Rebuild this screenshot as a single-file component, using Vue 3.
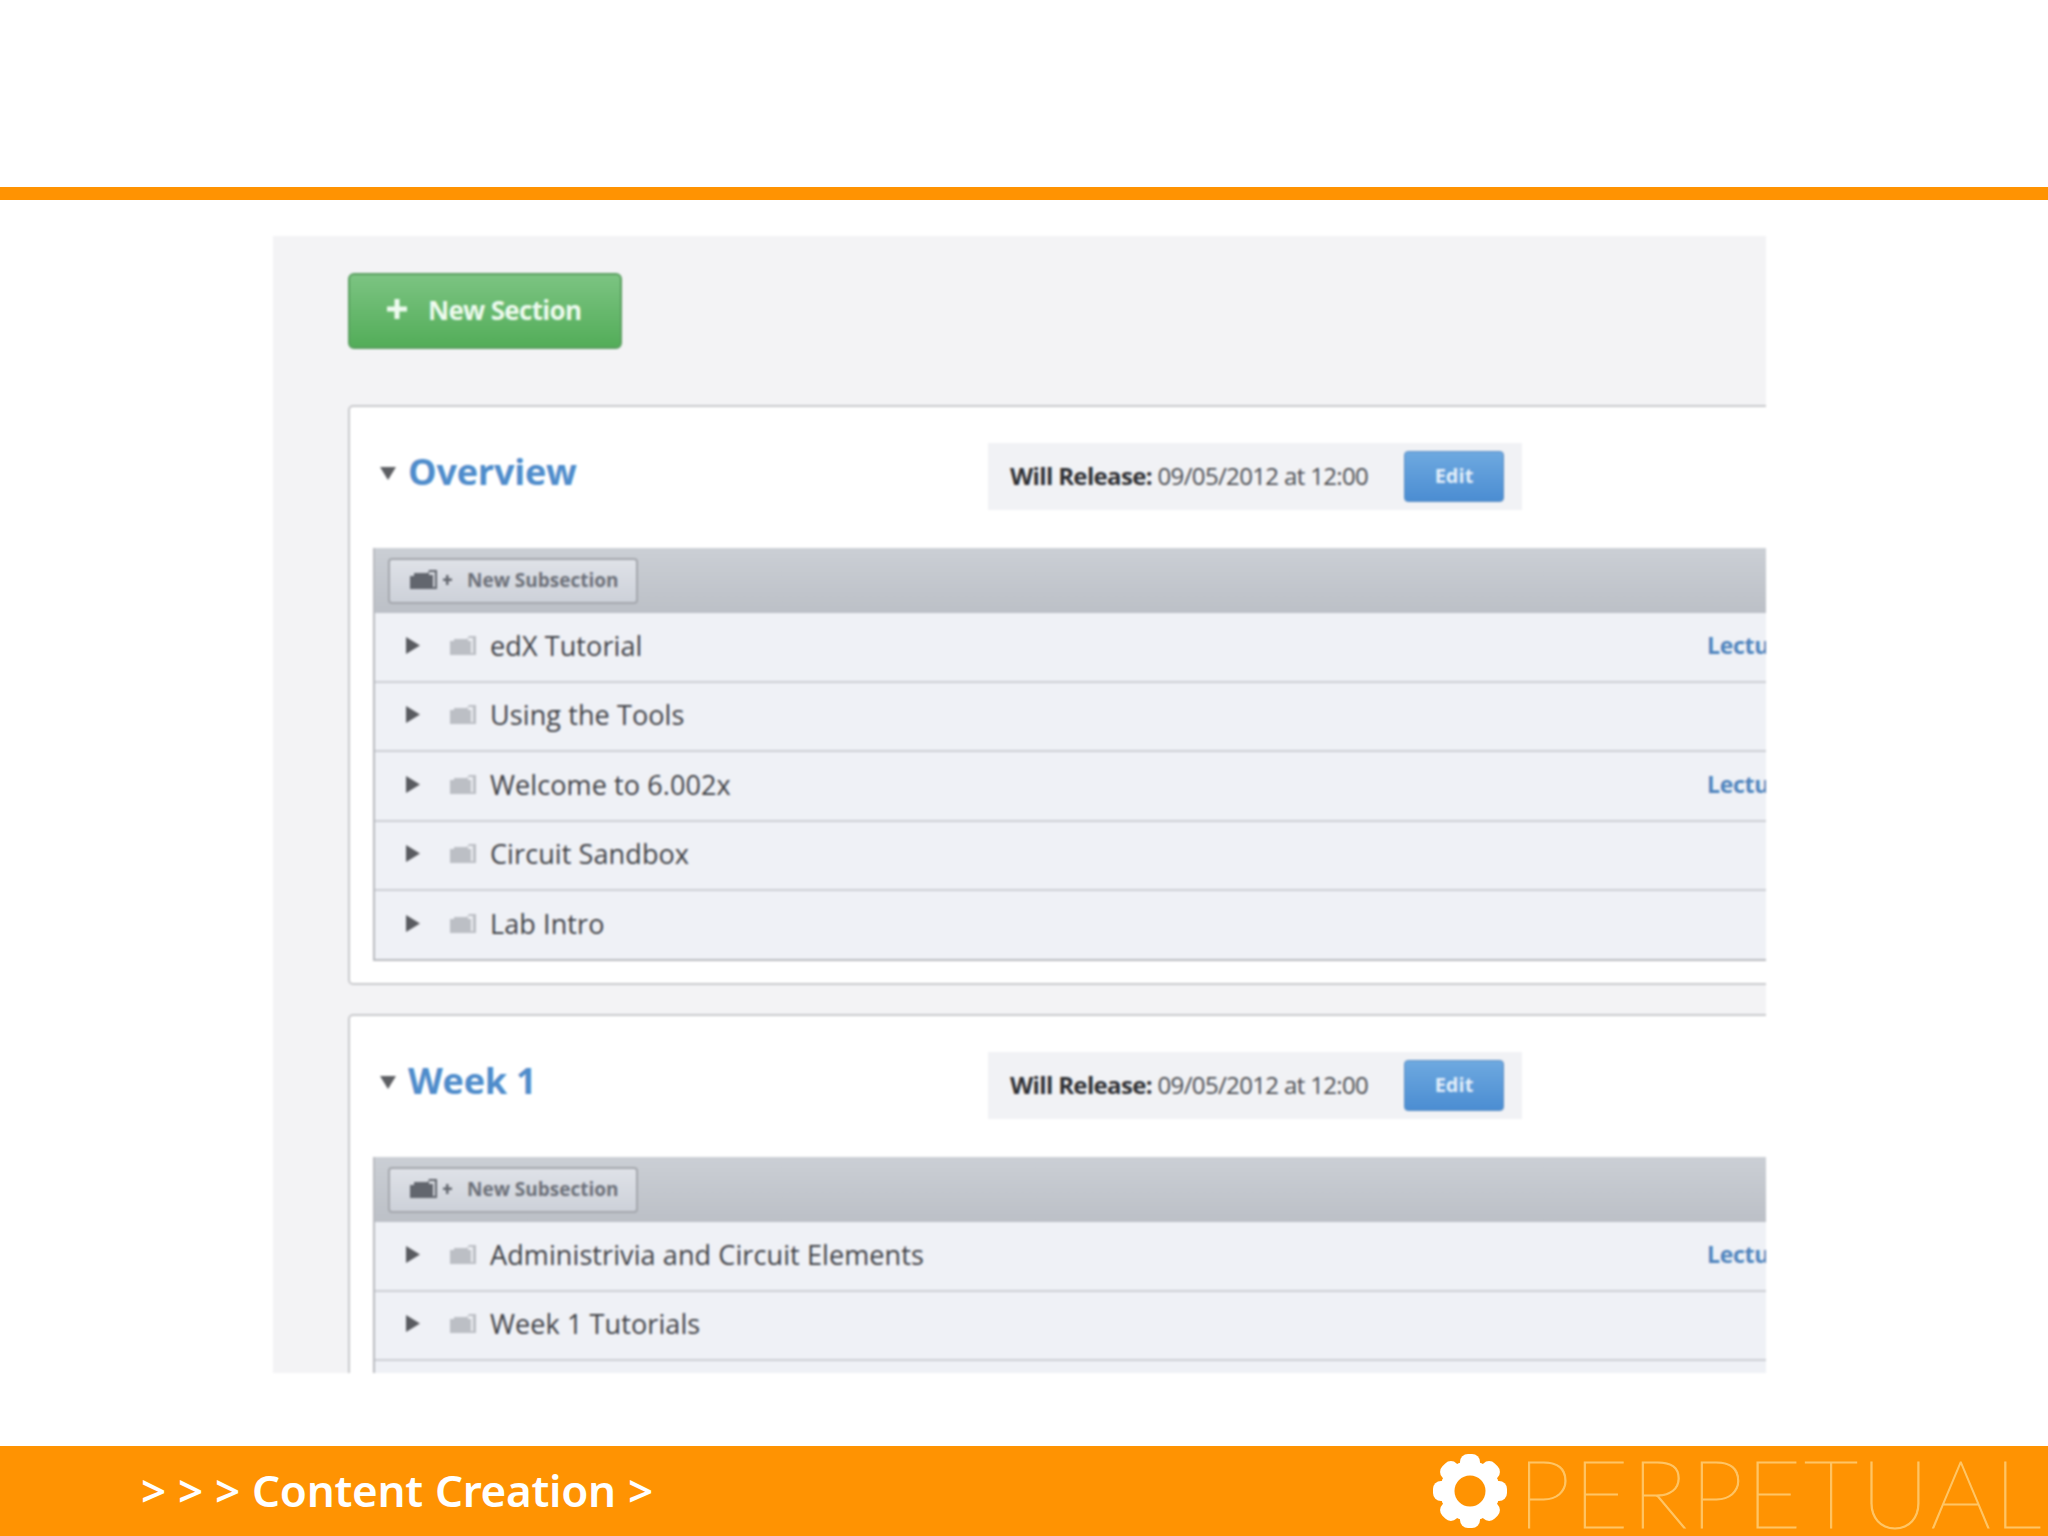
<script setup>
const sections = [
  { title: 'Overview', rows: [
    { name: 'edX Tutorial', kind: 'Lecture' },
    { name: 'Using the Tools', kind: '' },
    { name: 'Welcome to 6.002x', kind: 'Lecture' },
    { name: 'Circuit Sandbox', kind: '' },
    { name: 'Lab Intro', kind: '' },
  ]},
  { title: 'Week 1', rows: [
    { name: 'Administrivia and Circuit Elements', kind: 'Lecture' },
    { name: 'Week 1 Tutorials', kind: '' },
    { name: 'Circuit Analysis', kind: '' },
  ]},
]
const teeth = [0, 45, 90, 135, 180, 225, 270, 315]
</script>

<template>
  <div class="page">
    <div class="rule"></div>
    <main class="stage">
      <div class="shot">
        <button class="new-section">
          <svg class="plus" viewBox="0 0 22 22"><path d="M8.500 1h5v7.500H21v5h-7.500V21h-5v-7.500H1v-5h7.500z" /></svg>
          <span>New Section</span>
        </button>
        <section v-for="s in sections" :key="s.title" class="card">
          <header class="card-head">
            <div class="title-wrap">
              <svg class="caret" viewBox="0 0 16 13"><path d="M0 0h16L8 13z" /></svg>
              <h2>{{ s.title }}</h2>
            </div>
            <div class="release">
              <span class="release-text"><b>Will Release:</b> 09/05/2012 at 12:00</span>
              <button class="edit">Edit</button>
            </div>
          </header>
          <div class="table">
            <div class="table-head">
              <button class="new-sub">
                <svg class="sub-icon" viewBox="0 0 42 22">
                  <path d="M0 7h4V4h14l1-3h8v19H0z" fill="#62666e" />
                  <path d="M19 3h6v15h-2V6h-4z" fill="#d3d6dc" />
                  <path d="M33 9.500h3V6h2.500v3.500H42V12h-3.500v4H36v-4h-3z" fill="#62666e" />
                </svg>
                <span>New Subsection</span>
              </button>
            </div>
            <div v-for="r in s.rows" :key="r.name" class="row">
              <svg class="arrow" viewBox="0 0 14 17"><path d="M0 0l14 8.500L0 17z" /></svg>
              <svg class="folder" viewBox="0 0 27 21">
                <path d="M0 6h4V4h13l2-3h7v19H0z" fill="#bcbfc5" />
                <path d="M18 3h5v15h-2V6h-3z" fill="#eceef2" />
              </svg>
              <span class="name">{{ r.name }}</span>
              <span class="kind">{{ r.kind }}</span>
            </div>
          </div>
        </section>
      </div>
    </main>
    <footer class="footer">
      <div class="crumb">&gt; &gt; &gt; Content Creation &gt;</div>
      <div class="brand">
        <svg class="gear" viewBox="-37 -37 74 74">
          <g fill="#fff">
            <circle r="30" />
            <rect v-for="t in teeth" :key="t" x="-10" y="-37" width="20" height="20" rx="8" :transform="`rotate(${t})`" />
          </g>
          <circle r="15.500" fill="#ff9302" />
        </svg>
        <span class="word">PERPETUAL</span>
      </div>
    </footer>
  </div>
</template>

<style scoped>
.page {
  width: 2048px;
  height: 1536px;
  background: #fff;
  display: flex;
  flex-direction: column;
  overflow: hidden;
  font-family: "Open Sans", "Noto Sans", sans-serif;
}
.rule {
  height: 13px;
  margin-top: 187px;
  background: #ff9302;
  flex: none;
}
.stage {
  flex: 1;
  padding: 36px 282px 73px 273px;
  min-height: 0;
}
.shot {
  height: 100%;
  background: #f3f3f5;
  overflow: hidden;
  padding: 37px 0 0 75px;
  box-sizing: border-box;
  filter: blur(0.8px);
}
.new-section {
  display: flex;
  align-items: center;
  width: 274px;
  height: 76px;
  padding: 0 0 0 36px;
  box-sizing: border-box;
  border: 2px solid #5a9f60;
  border-radius: 6px;
  background: linear-gradient(#7cc482, #53ad59);
  color: #eefbef;
  font: 700 26px "Open Sans", sans-serif;
  letter-spacing: -0.7px;
  margin-bottom: 56px;
}
.plus {
  width: 22px;
  height: 22px;
  fill: #eefbef;
  margin-right: 20px;
  margin-top: -4px;
}
.new-section span { margin-top: -3px; }
.card {
  width: 1520px;
  height: 580px;
  box-sizing: border-box;
  background: #fff;
  border: 2px solid #c9cacd;
  border-radius: 5px;
  padding: 36px 0 0 23px;
  margin-bottom: 29px;
}
.card-head {
  display: flex;
  height: 67px;
  margin-bottom: 38px;
}
.title-wrap {
  width: 615px;
  flex: none;
  display: flex;
  align-items: center;
  height: 57px;
}
.caret {
  width: 16px;
  height: 13px;
  fill: #5d5f63;
  margin: 3px 12px 0 7px;
}
h2 {
  margin: 0;
  font: 700 36px "Open Sans", sans-serif;
  color: #4f8ccb;
  letter-spacing: -0.2px;
}
.release {
  width: 534px;
  box-sizing: border-box;
  padding: 0 18px 0 22px;
  background: #f1f2f5;
  display: flex;
  align-items: center;
  justify-content: space-between;
}
.release-text {
  font-size: 24px;
  color: #4b4d52;
  letter-spacing: -0.65px;
  white-space: nowrap;
  margin-top: -3px;
}
.release-text b { color: #2f3034; font-weight: 700; }
.edit {
  width: 100px;
  height: 51px;
  padding: 0 0 2px;
  border: 1px solid #5d8fc4;
  border-radius: 4px;
  background: linear-gradient(#6ea9e0, #4b8dd2);
  color: #e3effa;
  font: 700 20px "Open Sans", sans-serif;
}
.table {
  width: 1500px;
  border: solid #b9bbc0;
  border-width: 0 0 2px 2px;
  background: #eff1f6;
}
.table-head {
  height: 65px;
  box-sizing: border-box;
  padding: 10px 0 0 13px;
  background: linear-gradient(#cbcfd5, #bcc0c7);
}
.new-sub {
  width: 250px;
  height: 46px;
  display: flex;
  align-items: center;
  padding: 0 0 2px 20px;
  box-sizing: border-box;
  border: 2px solid #a4a7ad;
  border-radius: 4px;
  background: linear-gradient(#dfe2e8, #cdd1d9);
  color: #6c7079;
  font: 700 19px "Open Sans", sans-serif;
  letter-spacing: 0;
}
.sub-icon {
  width: 42px;
  height: 22px;
  margin-right: 15px;
}
.row {
  height: 69.500px;
  box-sizing: border-box;
  display: flex;
  align-items: center;
  padding-left: 31px;
  padding-bottom: 3px;
  border-bottom: 2px solid #ccced4;
}
.row:last-child { border-bottom: 0; height: 68px; }
.arrow {
  width: 14px;
  height: 17px;
  fill: #595b60;
  flex: none;
  margin-right: 30px;
}
.folder {
  width: 27px;
  height: 21px;
  flex: none;
  margin-right: 13px;
}
.name {
  flex: 1;
  font-size: 27px;
  color: #3f4146;
  white-space: nowrap;
  letter-spacing: 0.1px;
}
.kind {
  width: 168px;
  flex: none;
  font-size: 23px;
  font-weight: 700;
  color: #4f84bd;
  letter-spacing: -0.3px;
  margin-top: -1px;
}
.footer {
  height: 90px;
  flex: none;
  background: #ff9302;
  display: flex;
  align-items: center;
  justify-content: space-between;
  padding-left: 141px;
}
.crumb {
  color: #fff;
  font: 600 44px "Noto Sans", sans-serif;
  letter-spacing: -0.3px;
  word-spacing: 1px;
  margin-top: -2px;
}
.brand {
  display: flex;
  align-items: center;
  padding-right: 4px;
  filter: blur(0.5px);
}
.gear {
  width: 74px;
  height: 74px;
  margin-right: 11px;
}
.word {
  font: 100 95px Lato, sans-serif;
  color: #ffc565;
  -webkit-text-stroke: 1px #ffc565;
  letter-spacing: 2.7px;
  line-height: 1;
}
</style>
